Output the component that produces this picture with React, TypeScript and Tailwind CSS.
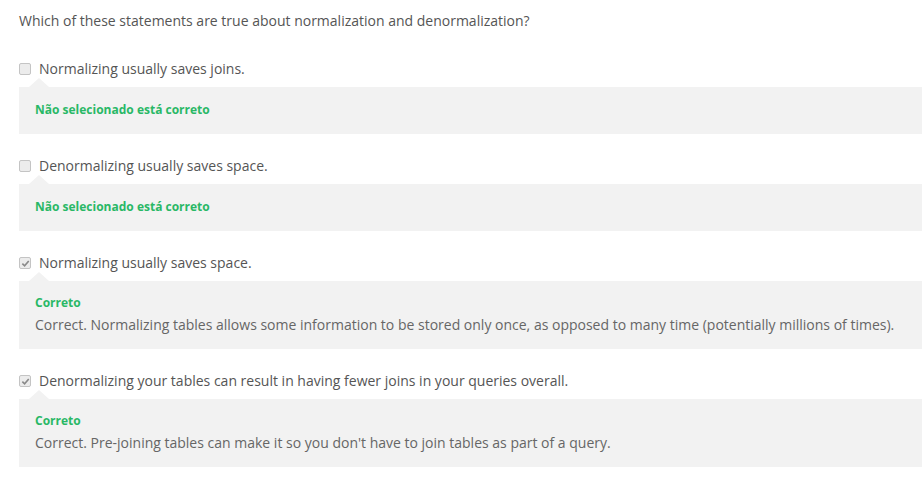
const items = [
  {
    label: 'Normalizing usually saves joins.',
    checked: false,
    title: 'Não selecionado está correto',
    body: '',
  },
  {
    label: 'Denormalizing usually saves space.',
    checked: false,
    title: 'Não selecionado está correto',
    body: '',
  },
  {
    label: 'Normalizing usually saves space.',
    checked: true,
    title: 'Correto',
    body: 'Correct. Normalizing tables allows some information to be stored only once, as opposed to many time (potentially millions of times).',
  },
  {
    label: 'Denormalizing your tables can result in having fewer joins in your queries overall.',
    checked: true,
    title: 'Correto',
    body: "Correct. Pre-joining tables can make it so you don't have to join tables as part of a query.",
  },
];

const CheckBox = ({ checked }: { checked: boolean }) => (
  <div className="w-[12px] h-[12px] rounded-[2px] border border-[#c4c4c4] bg-[#ececec] flex items-center justify-center shrink-0">
    {checked && (
      <svg width="9" height="9" viewBox="0 0 10 10">
        <path d="M1.5 5.2 L4 7.6 L8.6 2.2" fill="none" stroke="#8a8a8a" strokeWidth="1.8" />
      </svg>
    )}
  </div>
);

export default function App() {
  return (
    <div className="w-[922px] h-[485px] bg-white pl-[19px] pt-[11px] font-['Open_Sans',sans-serif] text-[#555] overflow-hidden">
      <p className="text-[14px] leading-[20px]">
        Which of these statements are true about normalization and denormalization?
      </p>
      <div className="mt-[28px] flex flex-col gap-[22px]">
        {items.map((item, i) => (
          <div key={i}>
            <div className="flex items-center gap-[8px] h-[20px]">
              <CheckBox checked={item.checked} />
              <span className="text-[14px] leading-[20px] text-[#555]">{item.label}</span>
            </div>
            <div className="relative mt-[8px] bg-[#f2f2f2] px-[16px] pt-[13px] pb-[14px]">
              <div className="absolute left-[10px] -top-[9px] w-0 h-0 border-l-[10px] border-r-[10px] border-b-[9px] border-l-transparent border-r-transparent border-b-[#f2f2f2]" />
              <div className={`text-[12px] font-bold text-[#29b866] leading-[16px] ${item.body ? 'pt-[1px]' : 'py-[2px]'}`}>
                {item.title}
              </div>
              {item.body && (
                <div className="mt-[4px] text-[14px] leading-[20px] text-[#666]">{item.body}</div>
              )}
            </div>
          </div>
        ))}
      </div>
    </div>
  );
}
